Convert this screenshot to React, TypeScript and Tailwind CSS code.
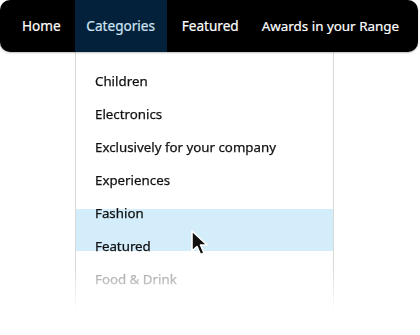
import React from 'react';

const categories = ['Children', 'Electronics', 'Exclusively for your company', 'Experiences', 'Fashion', 'Featured'];

export default function App() {
  return (
    <div className="w-[420px] h-[335px] bg-white overflow-hidden" style={{ fontFamily: '"Noto Sans", "Open Sans", sans-serif' }}>
      <nav className="relative z-10 w-[418px] h-[52px] bg-black rounded-[10px] flex items-center pl-[10px] shadow-[0_1px_2px_rgba(0,0,0,0.25)] whitespace-nowrap [-webkit-text-stroke:0.2px_currentColor]">
        <div className="h-full flex items-center text-[13.6px] text-white pl-3 pr-[14px]">Home</div>
        <div className="h-full w-[92px] flex items-center justify-center text-[13.6px] bg-[#03213a] text-[#cfe5f4]">Categories</div>
        <div className="h-full flex items-center text-[13.6px] text-white pl-[15px] pr-[11px]">Featured</div>
        <div className="h-full flex items-center text-[13.4px] text-white px-3">Awards in your Range</div>
      </nav>

      <div className="relative ml-[75px] w-[259px] h-[260px] border-x border-[#d8d8d8] [mask-image:linear-gradient(to_bottom,black_82%,transparent_100%)]">
        <ul className="pt-[13px] text-[13.3px] text-[#111] [-webkit-text-stroke:0.25px_currentColor]">
          {categories.map((c) => (
            <li key={c} className="h-[33px] flex items-center pl-[19px]">
              {c}
            </li>
          ))}
          <li className="h-[33px] flex items-center pl-[19px] text-[#9a9a9a]">Food &amp; Drink</li>
        </ul>
        <div className="absolute left-0 right-0 top-[157px] h-[42px] bg-[#d3edfb] mix-blend-multiply" />
        <svg className="absolute left-[114px] top-[177px]" width="22" height="30" viewBox="0 0 22 30">
          <path d="M2 2 L2 22 L7 17.5 L10.5 25.5 L14 24 L10.5 16 L17 16 Z" fill="#111" stroke="#fff" strokeWidth="1.6" strokeLinejoin="round" />
        </svg>
      </div>
    </div>
  );
}
